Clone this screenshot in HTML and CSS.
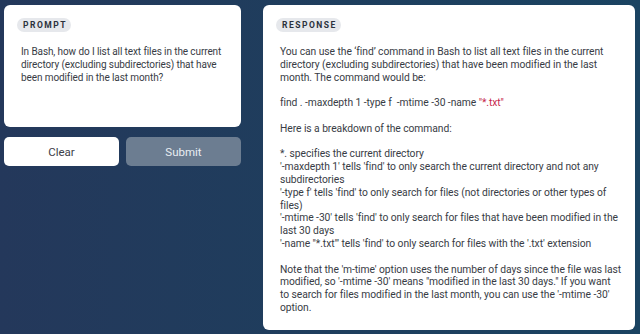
FILE: index.html
```html
<!DOCTYPE html>
<html lang="en">
<head>
<meta charset="utf-8">
<title>Prompt and response</title>
<link rel="stylesheet" href="styles.css">
</head>
<body>
<main class="layout">
  <section class="left">
    <div class="card prompt-card">
      <span class="badge">PROMPT</span>
      <p class="body">In Bash, how do I list all text files in the current directory (excluding subdirectories) that have been modified in the last month?</p>
    </div>
    <div class="actions">
      <button class="btn btn-clear">Clear</button>
      <button class="btn btn-submit">Submit</button>
    </div>
  </section>
  <section class="card response-card">
    <span class="badge">RESPONSE</span>
    <div class="body">
      <p>You can use the ‘find’ command in Bash to list all text files in the current directory (excluding subdirectories) that have been modified in the last month. The command would be:</p>
      <p>find . -maxdepth 1 -type f &nbsp;-mtime -30 -name <span class="str">"*.txt"</span></p>
      <p>Here is a breakdown of the command:</p>
      <p>*. specifies the current directory<br>
      '-maxdepth 1' tells 'find' to only search the current directory and not any subdirectories<br>
      '-type f' tells 'find' to only search for files (not directories or other types of files)<br>
      '-mtime -30' tells 'find' to only search for files that have been modified in the last 30 days<br>
      '-name "*.txt"' tells 'find' to only search for files with the '.txt' extension</p>
      <p class="note">Note that the 'm-time' option uses the number of days since the file was last<br>modified, so '-mtime -30' means "modified in the last 30 days." If you want<br>to search for files modified in the last month, you can use the '-mtime -30'<br>option.</p>
    </div>
  </section>
</main>
</body>
</html>
```

FILE: styles.css
```css
html, body {
  margin: 0;
  padding: 0;
}
body {
  width: 640px;
  height: 334px;
  overflow: hidden;
  background: linear-gradient(90deg, #24385b 0%, #1f3d5d 45%, #1a4361 100%);
  font-family: Roboto, "Liberation Sans", sans-serif;
  color: #383c45;
}
.layout {
  display: flex;
  align-items: flex-start;
  padding: 5px 5px 0 4px;
  gap: 22px;
}
.left {
  width: 237px;
  display: flex;
  flex-direction: column;
  gap: 10px;
}
.card {
  background: #ffffff;
  border-radius: 6px;
  box-sizing: border-box;
  padding: 13px 17px 0 13px;
  display: flex;
  flex-direction: column;
  align-items: flex-start;
}
.prompt-card {
  height: 122px;
}
.response-card {
  width: 372px;
  height: 325px;
  padding-right: 18px;
}
.badge {
  display: block;
  background: #e6e8ec;
  color: #2b313c;
  font-size: 8.5px;
  font-weight: 700;
  letter-spacing: 1.5px;
  line-height: 14px;
  padding: 0 4px 0 6px;
  border-radius: 7px;
}
.body {
  margin: 14px 0 0 4px;
  font-size: 10px;
  line-height: 12.8px;
  letter-spacing: -0.1px;
}
.response-card .body {
  font-size: 10.3px;
  letter-spacing: -0.06px;
}
.body p {
  margin: 0 0 12.8px 0;
}
.body .note {
  white-space: nowrap;
}
.str {
  color: #c6264a;
}
.actions {
  display: flex;
  gap: 7px;
}
.btn {
  flex: 1;
  height: 29px;
  border: none;
  border-radius: 5px;
  font-family: Roboto, "Liberation Sans", sans-serif;
  font-size: 11.5px;
}
.btn-clear {
  background: #ffffff;
  color: #3c4048;
}
.btn-submit {
  background: #6c7d91;
  color: #e9edf2;
}
```
